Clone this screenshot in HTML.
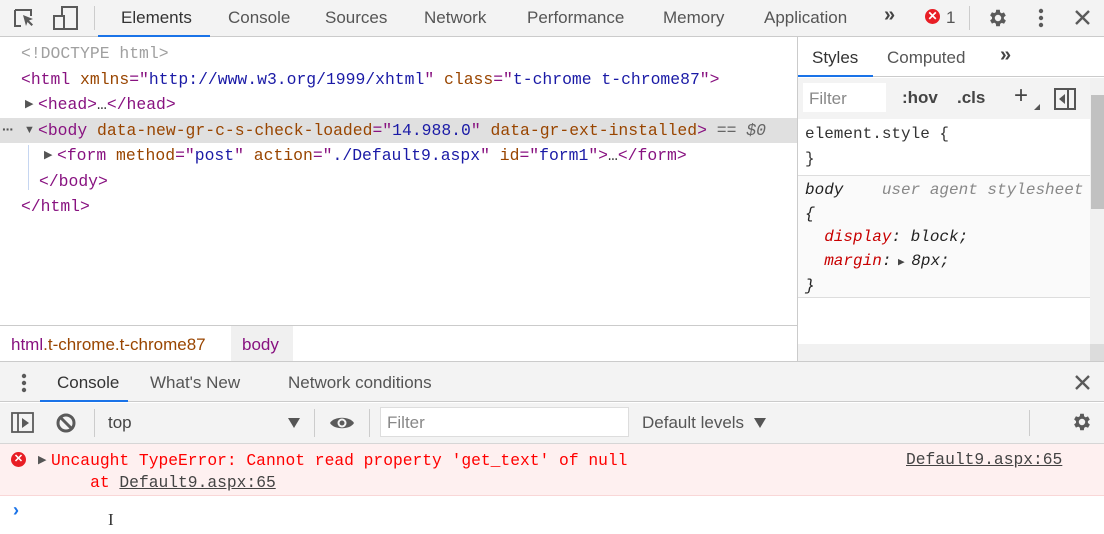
<!DOCTYPE html>
<html><head><style>
*{box-sizing:border-box;margin:0;padding:0}
body{width:1104px;height:534px;overflow:hidden;background:#fff;font-family:"Liberation Sans",sans-serif;position:relative;color:#333}
.abs{position:absolute}
.mono{font-family:"Liberation Mono",monospace;font-size:16.4px;white-space:pre}
.ln{position:absolute;font-family:"Liberation Mono",monospace;font-size:16.4px;white-space:pre;line-height:20px}
.tri{position:absolute;font-size:11px;color:#555;line-height:20px}
.tb{background:#f3f3f3}
.tab{position:absolute;font-size:17px;color:#555;top:8px}
.tag{color:#881280}.at{color:#994500}.av{color:#1a1aa6}.gr{color:#a0a0a0}
</style></head><body>
<div class="abs tb" style="left:0;top:0;width:1104px;height:37px;border-bottom:1px solid #cbcbcb"></div>
<svg class="abs" style="left:13px;top:6px" width="70" height="26" viewBox="0 0 70 26">
<path d="M2 4h16v6M2 4v16h6" fill="none" stroke="#5a5a5a" stroke-width="2"/>
<path d="M10 9l10 4-4 1.5 4 4-1.5 1.5-4-4-1.5 4z" fill="#5a5a5a"/>
<rect x="49" y="1" width="15" height="22" fill="none" stroke="#5a5a5a" stroke-width="2"/>
<rect x="41" y="10" width="10" height="13" fill="#f3f3f3" stroke="#5a5a5a" stroke-width="2"/>
</svg>
<div class="abs" style="left:94px;top:6px;width:1px;height:24px;background:#ccc"></div>
<div class="tab" style="left:121px;color:#333">Elements</div>
<div class="abs" style="left:98px;top:35px;width:112px;height:2px;background:#1a73e8"></div>
<div class="tab" style="left:228px">Console</div>
<div class="tab" style="left:325px">Sources</div>
<div class="tab" style="left:424px">Network</div>
<div class="tab" style="left:527px">Performance</div>
<div class="tab" style="left:663px">Memory</div>
<div class="tab" style="left:764px">Application</div>
<div class="tab" style="left:884px;font-weight:bold;color:#444;top:4px;font-size:20px">»</div>
<div class="abs" style="left:925px;top:9px;width:15px;height:15px;border-radius:50%;background:#e81e25;color:#fff;font-size:12px;line-height:15px;text-align:center;font-weight:bold">✕</div>
<div class="tab" style="left:946px">1</div>
<div class="abs" style="left:969px;top:6px;width:1px;height:24px;background:#ccc"></div>
<svg class="abs" style="left:987px;top:7px" width="22" height="22" viewBox="0 0 24 24"><path fill="#5a5a5a" d="M19.4 13a7.5 7.5 0 000-2l2.1-1.6-2-3.5-2.5 1a7.3 7.3 0 00-1.7-1L15 3h-4l-.4 2.7a7.3 7.3 0 00-1.7 1l-2.5-1-2 3.5L6.5 11a7.5 7.5 0 000 2l-2.1 1.6 2 3.5 2.5-1c.5.4 1.1.7 1.700 1L11 21h4l.4-2.7c.6-.3 1.2-.6 1.7-1l2.5 1 2-3.5zM13 15.5a3.5 3.5 0 110-7 3.5 3.5 0 010 7z" transform="translate(-1 0)"/></svg>
<svg class="abs" style="left:1036px;top:8px" width="10" height="22"><circle cx="5" cy="3" r="2.2" fill="#5a5a5a"/><circle cx="5" cy="10" r="2.2" fill="#5a5a5a"/><circle cx="5" cy="17" r="2.2" fill="#5a5a5a"/></svg>
<svg class="abs" style="left:1074px;top:9px" width="17" height="17"><path d="M2 2l13 13M15 2L2 15" stroke="#5a5a5a" stroke-width="2.4"/></svg>

<div class="abs" style="left:0;top:118px;width:797px;height:25px;background:#e0e0e0"></div>
<div class="abs" style="left:28px;top:145px;width:1px;height:45px;background:#c6d6f1"></div>
<div class="ln" style="left:21px;top:44px"><span class="gr">&lt;!DOCTYPE html&gt;</span></div>
<div class="ln" style="left:21px;top:70px"><span class="tag">&lt;html</span> <span class="at">xmlns</span><span class="tag">="</span><span class="av">http://www.w3.org/1999/xhtml</span><span class="tag">"</span> <span class="at">class</span><span class="tag">="</span><span class="av">t-chrome t-chrome87</span><span class="tag">"&gt;</span></div>
<div class="tri" style="left:25px;top:94px">▶</div>
<div class="ln" style="left:38px;top:95px"><span class="tag">&lt;head&gt;</span>…<span class="tag">&lt;/head&gt;</span></div>
<div class="abs" style="left:2px;top:121px;font-size:14px;color:#555;font-weight:bold;letter-spacing:-1px">···</div>
<div class="tri" style="left:24px;top:120px">▼</div>
<div class="ln" style="left:38px;top:121px"><span class="tag">&lt;body</span> <span class="at">data-new-gr-c-s-check-loaded</span><span class="tag">="</span><span class="av">14.988.0</span><span class="tag">"</span> <span class="at">data-gr-ext-installed</span><span class="tag">&gt;</span> <span style="color:#666">== </span><span style="color:#666;font-style:italic">$0</span></div>
<div class="tri" style="left:44px;top:145px">▶</div>
<div class="ln" style="left:57px;top:146px"><span class="tag">&lt;form</span> <span class="at">method</span><span class="tag">="</span><span class="av">post</span><span class="tag">"</span> <span class="at">action</span><span class="tag">="</span><span class="av">./Default9.aspx</span><span class="tag">"</span> <span class="at">id</span><span class="tag">="</span><span class="av">form1</span><span class="tag">"&gt;</span>…<span class="tag">&lt;/form&gt;</span></div>
<div class="ln" style="left:39px;top:172px"><span class="tag">&lt;/body&gt;</span></div>
<div class="ln" style="left:21px;top:197px"><span class="tag">&lt;/html&gt;</span></div>

<div class="abs" style="left:0;top:325px;width:797px;height:1px;background:#cbcbcb"></div>
<div class="abs" style="left:231px;top:326px;width:62px;height:35px;background:#f0f0f0"></div>
<div class="abs" style="left:11px;top:335px;font-size:17px"><span class="tag">html</span><span class="at">.t-chrome.t-chrome87</span></div>
<div class="abs" style="left:242px;top:335px;font-size:17px" ><span class="tag">body</span></div>

<div class="abs" style="left:797px;top:37px;width:1px;height:324px;background:#cbcbcb"></div>
<div class="abs" style="left:798px;top:37px;width:306px;height:40px;border-bottom:1px solid #cbcbcb;background:#fff"></div>
<div class="tab" style="left:812px;top:48px;color:#333">Styles</div>
<div class="abs" style="left:798px;top:75px;width:75px;height:2px;background:#1a73e8"></div>
<div class="tab" style="left:887px;top:48px">Computed</div>
<div class="tab" style="left:1000px;top:44px;font-weight:bold;color:#444;font-size:20px">»</div>
<div class="abs" style="left:798px;top:78px;width:292px;height:41px;background:#f3f3f3"></div>
<div class="abs" style="left:803px;top:83px;width:83px;height:29px;background:#fff"></div>
<div class="abs" style="left:809px;top:89px;font-size:17px;color:#888">Filter</div>
<div class="abs" style="left:902px;top:88px;font-size:17px;font-weight:bold;color:#444">:hov</div>
<div class="abs" style="left:957px;top:88px;font-size:17px;font-weight:bold;color:#444">.cls</div>
<div class="abs" style="left:1014px;top:82px;font-size:24px;color:#444">+</div>
<div class="abs" style="left:1034px;top:104px;width:0;height:0;border-left:6px solid transparent;border-bottom:6px solid #555"></div>
<svg class="abs" style="left:1054px;top:88px" width="22" height="22"><rect x="1" y="1" width="20" height="20" fill="none" stroke="#555" stroke-width="2"/><path d="M14 1v20" stroke="#555" stroke-width="2"/><path d="M11 6l-6 5 6 5z" fill="#555"/></svg>
<div class="abs" style="left:798px;top:175px;width:292px;height:1px;background:#ddd"></div>
<div class="abs" style="left:798px;top:176px;width:292px;height:121px;background:#fafafa"></div>
<div class="abs" style="left:798px;top:297px;width:292px;height:1px;background:#ddd"></div>
<div class="abs mono" style="left:805px;top:122px;line-height:25px;color:#333;font-size:16px">element.style {
}</div>
<div class="abs mono" style="left:805px;top:179px;line-height:23.5px;font-style:italic;color:#222;font-size:16px">body    <span style="color:#888">user agent stylesheet</span>
{
  <span style="color:#c80000">display</span>: block;
  <span style="color:#c80000">margin</span>:<span style="font-size:11px;font-style:normal;color:#444"> ▶ </span>8px;
}</div>
<div class="abs" style="left:1090px;top:78px;width:14px;height:266px;background:#f1f1f1"></div>
<div class="abs" style="left:1091px;top:95px;width:13px;height:114px;background:#c1c1c1"></div>
<div class="abs" style="left:798px;top:344px;width:292px;height:17px;background:#f1f1f1"></div>
<div class="abs" style="left:1090px;top:344px;width:14px;height:17px;background:#dcdcdc"></div>

<div class="abs tb" style="left:0;top:361px;width:1104px;height:41px;border-top:1px solid #cbcbcb;border-bottom:1px solid #cbcbcb"></div>
<svg class="abs" style="left:20px;top:373px" width="8" height="22"><circle cx="4" cy="3" r="2.2" fill="#5a5a5a"/><circle cx="4" cy="10" r="2.2" fill="#5a5a5a"/><circle cx="4" cy="17" r="2.2" fill="#5a5a5a"/></svg>
<div class="tab" style="left:57px;top:373px;color:#333">Console</div>
<div class="abs" style="left:40px;top:400px;width:88px;height:2px;background:#1a73e8"></div>
<div class="tab" style="left:150px;top:373px">What's New</div>
<div class="tab" style="left:288px;top:373px">Network conditions</div>
<svg class="abs" style="left:1074px;top:374px" width="17" height="17"><path d="M2 2l13 13M15 2L2 15" stroke="#5a5a5a" stroke-width="2.4"/></svg>
<div class="abs tb" style="left:0;top:403px;width:1104px;height:41px;border-bottom:1px solid #d6d6d6"></div>
<svg class="abs" style="left:11px;top:412px" width="24" height="22"><rect x="1" y="1" width="21" height="19" fill="none" stroke="#5a5a5a" stroke-width="1.8"/><path d="M7 1v19" stroke="#5a5a5a" stroke-width="1.8"/><path d="M11 6l7 5-7 5z" fill="#5a5a5a"/></svg>
<svg class="abs" style="left:55px;top:412px" width="22" height="22"><circle cx="11" cy="11" r="8" fill="none" stroke="#5a5a5a" stroke-width="3"/><path d="M5.5 5.5l11 11" stroke="#5a5a5a" stroke-width="3"/></svg>
<div class="abs" style="left:94px;top:409px;width:1px;height:28px;background:#ccc"></div>
<div class="abs" style="left:108px;top:413px;font-size:17px;color:#444">top</div>
<div class="abs" style="left:288px;top:418px;border-left:6px solid transparent;border-right:6px solid transparent;border-top:10px solid #555"></div>
<div class="abs" style="left:314px;top:409px;width:1px;height:28px;background:#ccc"></div>
<svg class="abs" style="left:329px;top:413px" width="26" height="20"><path d="M1 10C5 3 21 3 25 10 21 17 5 17 1 10z" fill="#5a5a5a"/><circle cx="13" cy="10" r="4.5" fill="#f3f3f3"/><circle cx="13" cy="10" r="2.5" fill="#5a5a5a"/></svg>
<div class="abs" style="left:369px;top:409px;width:1px;height:28px;background:#ccc"></div>
<div class="abs" style="left:380px;top:407px;width:249px;height:30px;background:#fff;border:1px solid #ddd"></div>
<div class="abs" style="left:387px;top:413px;font-size:17px;color:#888">Filter</div>
<div class="abs" style="left:642px;top:413px;font-size:17px;color:#555">Default levels</div>
<div class="abs" style="left:754px;top:418px;border-left:6px solid transparent;border-right:6px solid transparent;border-top:10px solid #555"></div>
<div class="abs" style="left:1029px;top:410px;width:1px;height:26px;background:#ccc"></div>
<svg class="abs" style="left:1071px;top:411px" width="22" height="22" viewBox="0 0 24 24"><path fill="#5a5a5a" d="M19.4 13a7.5 7.5 0 000-2l2.1-1.6-2-3.5-2.5 1a7.3 7.3 0 00-1.7-1L15 3h-4l-.4 2.7a7.3 7.3 0 00-1.7 1l-2.5-1-2 3.5L6.5 11a7.5 7.5 0 000 2l-2.1 1.6 2 3.5 2.5-1c.5.4 1.1.7 1.7 1L11 21h4l.4-2.7c.6-.3 1.2-.6 1.7-1l2.5 1 2-3.5zM13 15.5a3.5 3.5 0 110-7 3.5 3.5 0 010 7z" transform="translate(-1 0)"/></svg>
<div class="abs" style="left:0;top:444px;width:1104px;height:52px;background:#fef0f0;border-bottom:1px solid #f9d7d7"></div>
<div class="abs" style="left:11px;top:452px;width:15px;height:15px;border-radius:50%;background:#e81e25;color:#fff;font-size:11px;line-height:15px;text-align:center;font-weight:bold">✕</div>
<div class="abs" style="left:38px;top:453px;font-size:11px;color:#555">▶</div>
<div class="abs mono" style="left:51px;top:450px;line-height:22px;color:#f00;font-size:16.3px">Uncaught TypeError: Cannot read property 'get_text' of null
    at <span style="color:#444;text-decoration:underline">Default9.aspx:65</span></div>
<div class="abs mono" style="left:906px;top:450px;color:#444;text-decoration:underline;font-size:16.3px">Default9.aspx:65</div>
<div class="abs" style="left:13px;top:500px;font-size:18px;color:#1a73e8;font-weight:bold">›</div>
<div class="abs" style="left:108px;top:510px;font-size:17px;color:#333;font-family:'Liberation Serif',serif">I</div>
</body></html>
